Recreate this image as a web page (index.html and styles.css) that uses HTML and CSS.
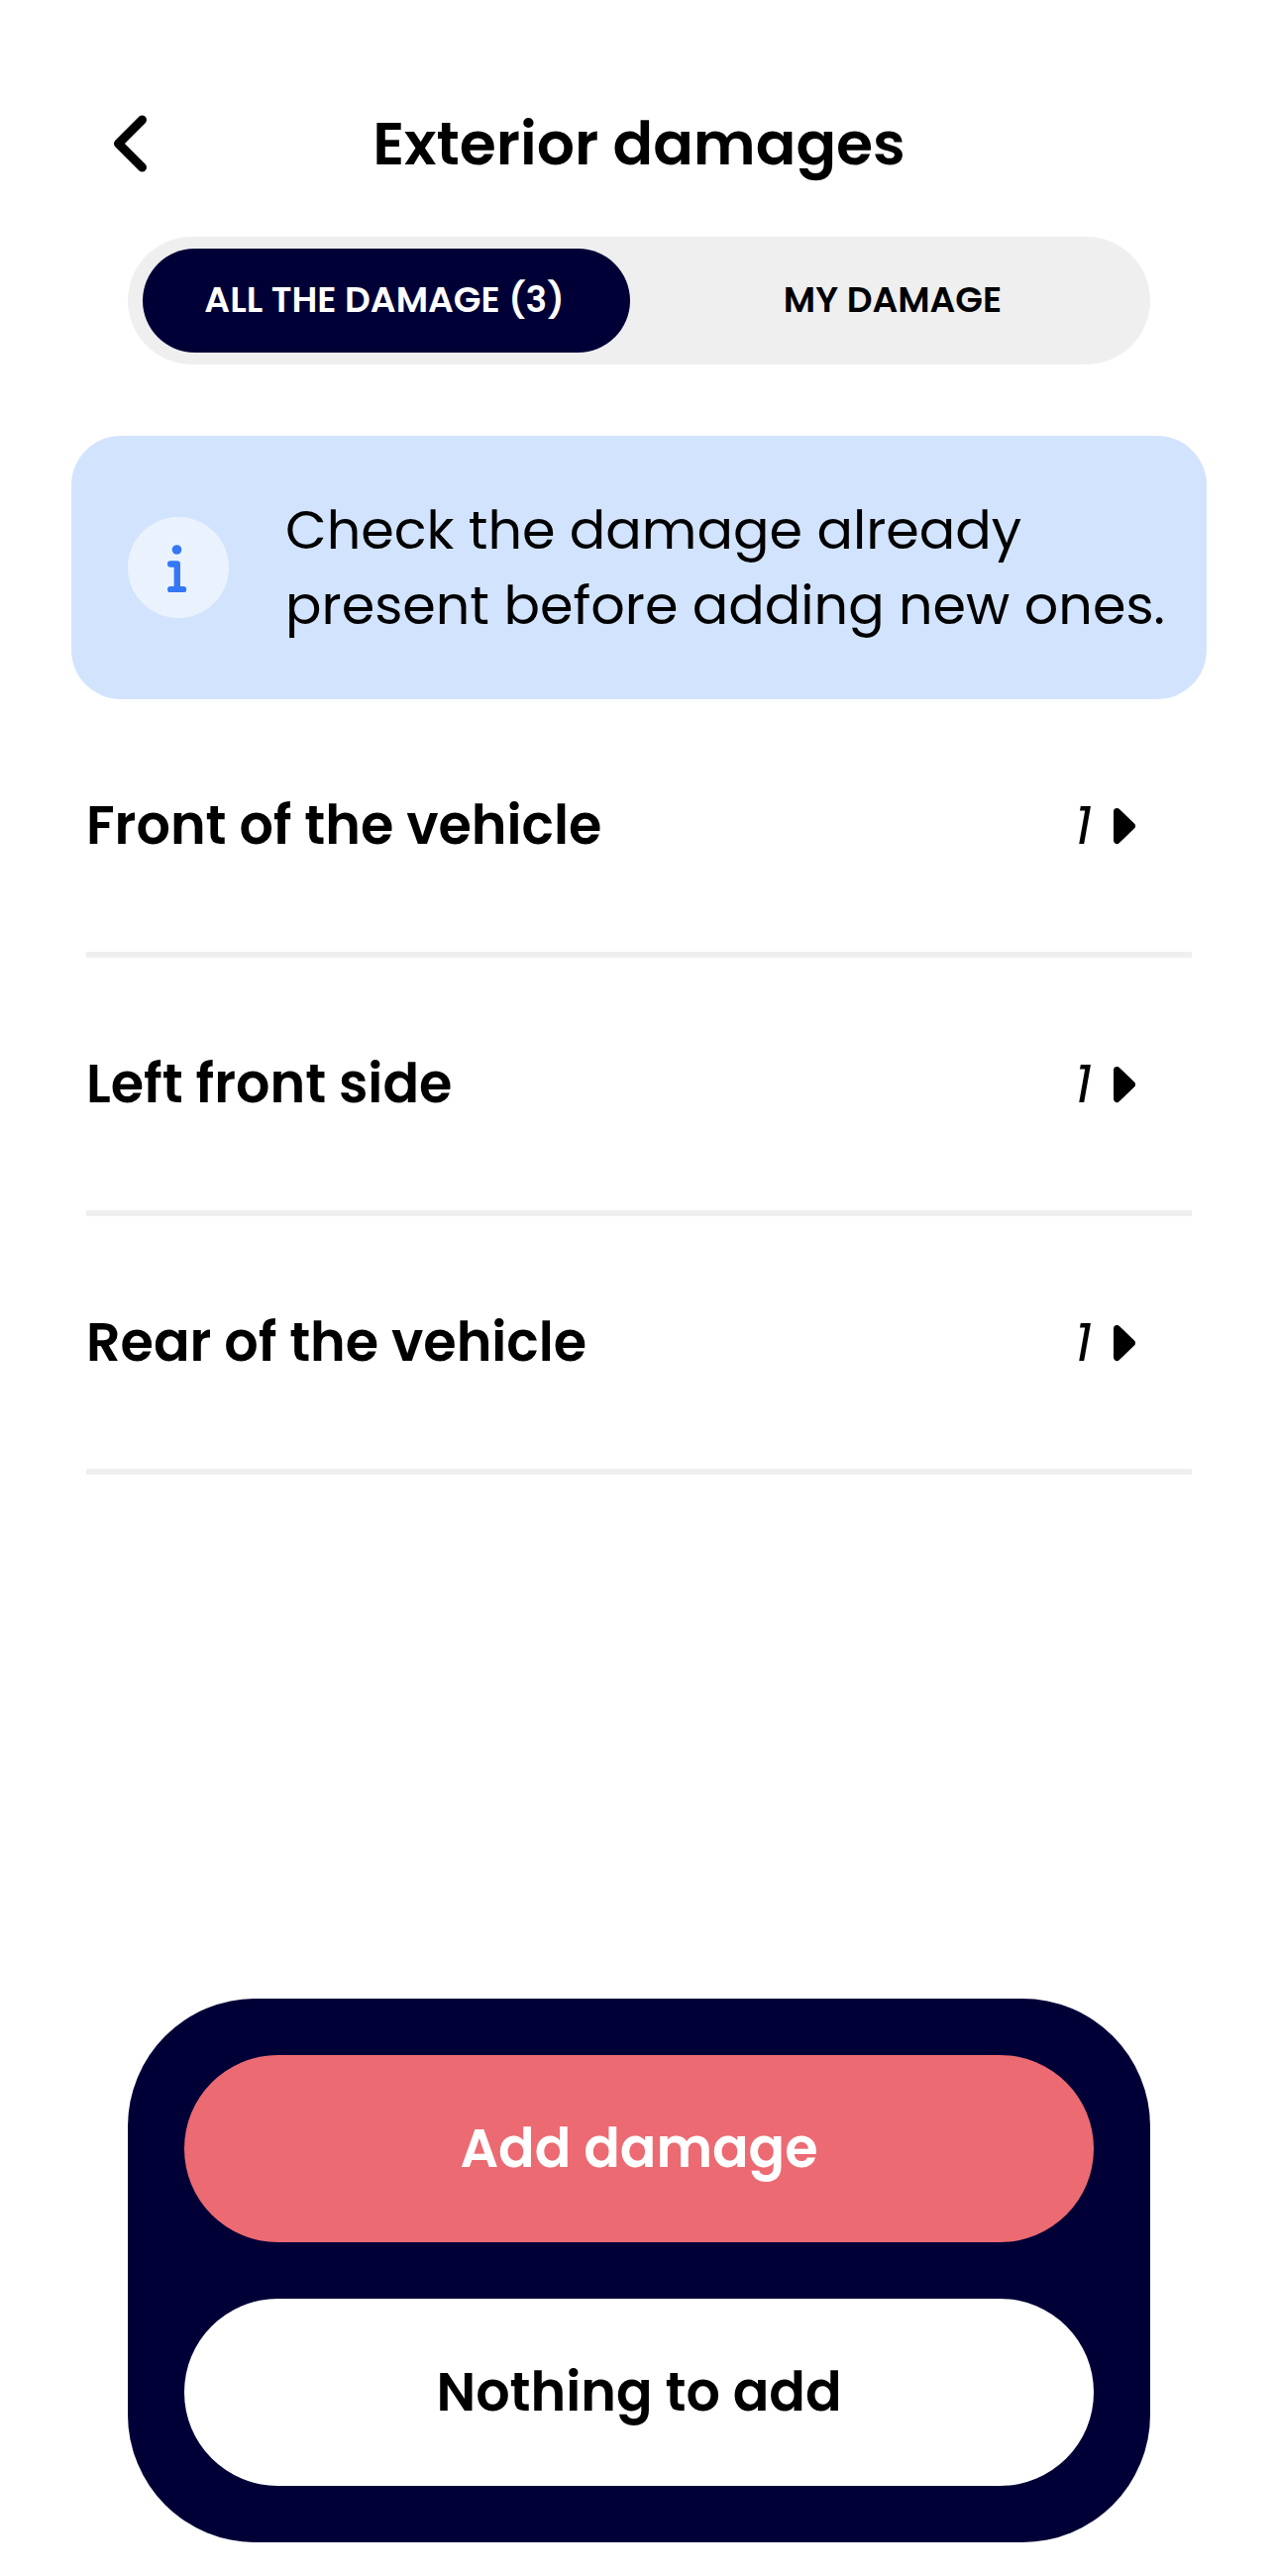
FILE: index.html
```html
<!DOCTYPE html>
<html lang="en">

<head>
    <meta charset="UTF-8">
    <meta name="viewport" content="width=device-width, initial-scale=1.0">
    <title>Exterior damages</title>
    <link rel="stylesheet" href="styles.css">
</head>

<body>
    <header class="header">
        <button class="back" aria-label="Back">
            <svg width="36" height="60" viewBox="0 0 36 60">
                <path d="M30.5 6L6.5 30L30.5 54" />
            </svg>
        </button>
        <h1>Exterior damages</h1>
    </header>

    <nav class="tabs">
        <button class="tab active">ALL THE DAMAGE (3)</button>
        <button class="tab">MY DAMAGE</button>
    </nav>

    <section class="info">
        <div class="info-icon">
            <svg width="22" height="50" viewBox="0 0 22 50">
                <circle cx="9.5" cy="7" r="4.8" />
                <path d="M3.2 21.5H9.8V47M3.2 47.2H16" />
            </svg>
        </div>
        <p>Check the damage already<br>present before adding new ones.</p>
    </section>

    <ul class="damage-list">
        <li class="damage">
            <span class="name">Front of the vehicle</span>
            <span class="count">1</span>
            <svg class="arrow" width="24" height="38" viewBox="0 0 24 38">
                <path d="M5.5 4.5L20.5 19L5.5 33.5Z" />
            </svg>
        </li>
        <li class="damage">
            <span class="name">Left front side</span>
            <span class="count">1</span>
            <svg class="arrow" width="24" height="38" viewBox="0 0 24 38">
                <path d="M5.5 4.5L20.5 19L5.5 33.5Z" />
            </svg>
        </li>
        <li class="damage">
            <span class="name">Rear of the vehicle</span>
            <span class="count">1</span>
            <svg class="arrow" width="24" height="38" viewBox="0 0 24 38">
                <path d="M5.5 4.5L20.5 19L5.5 33.5Z" />
            </svg>
        </li>
    </ul>

    <footer class="actions">
        <button class="action add">Add damage</button>
        <button class="action nothing">Nothing to add</button>
    </footer>
</body>

</html>
```
FILE: styles.css
```css
* {
    box-sizing: border-box;
}

body {
    margin: 0;
    height: 2601px;
    display: flex;
    flex-direction: column;
    color: #000;
    background-color: #fff;
    font-family: Poppins, "Open Sans", "Noto Sans", sans-serif;
}

button {
    padding: 0;
    border: none;
    color: inherit;
    font: inherit;
    background: none;
    cursor: pointer;
}

svg {
    display: block;
}

.header {
    height: 239px;
    padding: 50px 113px 0;
    display: grid;
    grid-template-columns: 60px 1fr 60px;
    align-items: center;
}

.back path {
    fill: none;
    stroke: #000;
    stroke-width: 9;
    stroke-linecap: round;
    stroke-linejoin: round;
}

.header h1 {
    margin: 0;
    font-size: 60px;
    font-weight: 600;
    line-height: 84px;
    text-align: center;
    white-space: nowrap;
}

.tabs {
    height: 129px;
    margin: 0 129px;
    padding: 12px 15px;
    display: flex;
    gap: 20px;
    border-radius: 65px;
    background-color: #efefef;
}

.tab {
    flex: 1;
    padding-bottom: 2px;
    border-radius: 53px;
    font-size: 36px;
    font-weight: 600;
    white-space: nowrap;
}

.tab.active {
    flex: 0 0 492px;
    padding-right: 4px;
    color: #fff;
    background-color: #000037;
}

.info {
    height: 266px;
    margin: 72px 72px 0;
    padding-left: 57px;
    display: flex;
    align-items: center;
    border-radius: 50px;
    background-color: #d2e3fd;
}

.info-icon {
    width: 102px;
    height: 102px;
    padding: 0 0 1px 40px;
    display: flex;
    align-items: center;
    border-radius: 50%;
    background-color: #eaf3fd;
}

.info-icon circle {
    fill: #3478f6;
}

.info-icon path {
    fill: none;
    stroke: #3478f6;
    stroke-width: 6.4;
    stroke-linecap: round;
    stroke-linejoin: round;
}

.info p {
    margin: 0 0 0 57px;
    font-size: 54px;
    line-height: 76px;
    white-space: nowrap;
}

.damage-list {
    margin: 0 87px;
    padding: 0;
    list-style: none;
}

.damage {
    height: 261px;
    padding-right: 57px;
    display: flex;
    align-items: center;
    border-bottom: 6px solid #efefef;
}

.name {
    flex: 1;
    font-size: 54px;
    font-weight: 600;
}

.count {
    margin-right: 20px;
    font-size: 54px;
    font-style: italic;
}

.arrow path {
    fill: #000;
    stroke: #000;
    stroke-width: 7;
    stroke-linejoin: round;
}

.actions {
    height: 549px;
    margin: auto 129px 34px;
    padding: 57px;
    display: flex;
    flex-direction: column;
    gap: 57px;
    border-radius: 129px;
    background-color: #000037;
}

.action {
    flex: 1;
    border-radius: 95px;
    font-size: 54px;
    font-weight: 600;
}

.add {
    color: #fff;
    background-color: #ec6a72;
}

.nothing {
    background-color: #fff;
}
```
